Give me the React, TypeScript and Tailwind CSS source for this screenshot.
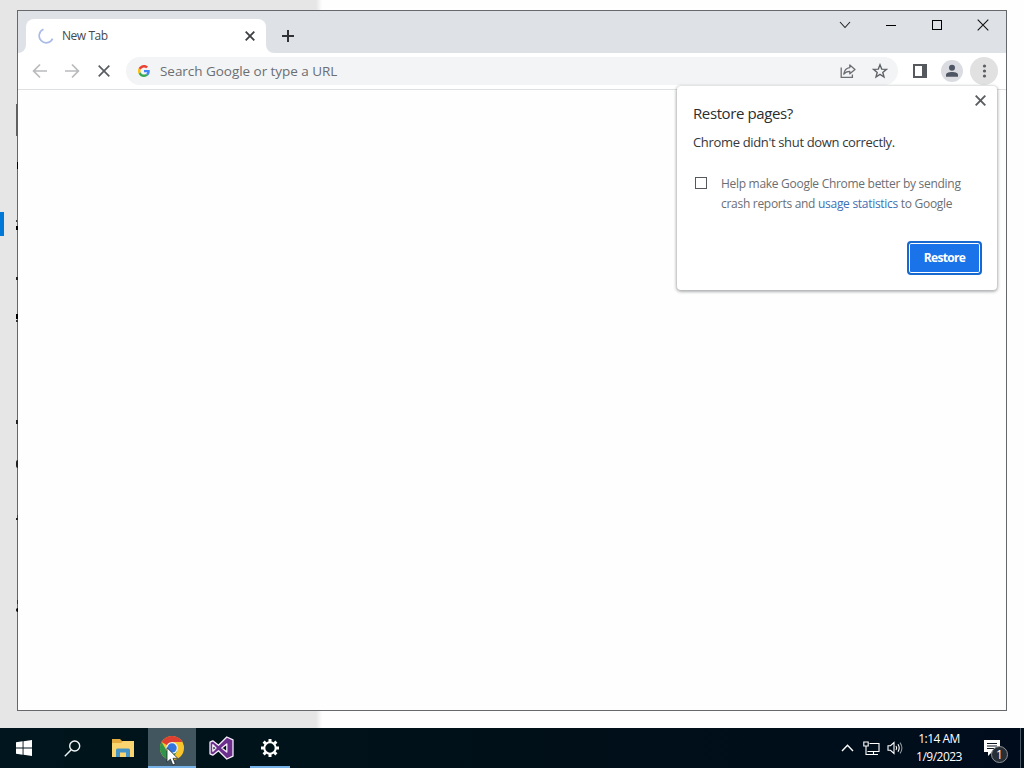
import type { ReactNode } from "react";

function Slot({ children, className = "" }: { children: ReactNode; className?: string }) {
  return <div className={`flex shrink-0 items-center justify-center ${className}`}>{children}</div>;
}

function CloseIcon({ size, stroke, color }: { size: number; stroke: number; color: string }) {
  return (
    <svg width={size} height={size} viewBox={`0 0 ${size} ${size}`} stroke={color} strokeWidth={stroke}>
      <path d={`M.7 .7 L${size - 0.7} ${size - 0.7} M${size - 0.7} .7 L.7 ${size - 0.7}`} />
    </svg>
  );
}

function ArrowIcon({ flip }: { flip?: boolean }) {
  return (
    <svg
      width="16"
      height="16"
      viewBox="0 0 16 16"
      fill="none"
      stroke="#b9babc"
      strokeWidth="1.7"
      className={flip ? "-scale-x-100" : ""}
    >
      <path d="M15 8H2M8 1.5L1.6 8L8 14.5" />
    </svg>
  );
}

function GoogleIcon() {
  return (
    <svg width="12" height="12" viewBox="0 0 48 48">
      <path fill="#EA4335" d="M24 9.5c3.54 0 6.71 1.22 9.21 3.6l6.85-6.85C35.9 2.38 30.47 0 24 0 14.62 0 6.51 5.38 2.56 13.22l7.98 6.19C12.43 13.72 17.74 9.5 24 9.5z" />
      <path fill="#4285F4" d="M46.98 24.55c0-1.57-.15-3.09-.38-4.55H24v9.02h12.94c-.58 2.96-2.26 5.48-4.78 7.18l7.73 6c4.51-4.18 7.09-10.36 7.09-17.65z" />
      <path fill="#FBBC05" d="M10.53 28.59c-.48-1.45-.76-2.99-.76-4.59s.27-3.14.76-4.59l-7.98-6.19C.92 16.46 0 20.12 0 24c0 3.88.92 7.54 2.56 10.78l7.97-6.19z" />
      <path fill="#34A853" d="M24 48c6.48 0 11.93-2.13 15.89-5.81l-7.73-6c-2.15 1.45-4.92 2.3-8.16 2.3-6.26 0-11.57-4.22-13.47-9.91l-7.98 6.19C6.51 42.62 14.62 48 24 48z" />
    </svg>
  );
}

function TabStrip() {
  return (
    <div className="flex h-[42px] shrink-0 bg-[#dee1e6] pl-2">
      <div className="relative mt-2 flex h-[34px] w-60 items-center rounded-t-lg bg-white pl-3 pr-[11px]">
        <svg width="8" height="8" className="absolute -left-2 bottom-0" fill="#fff">
          <path d="M8 0V8H0A8 8 0 0 0 8 0Z" />
        </svg>
        <svg width="8" height="8" className="absolute -right-2 bottom-0" fill="#fff">
          <path d="M0 0V8H8A8 8 0 0 1 0 0Z" />
        </svg>
        <svg width="16" height="16" viewBox="0 0 16 16" fill="none" stroke="#a9bbe6" strokeWidth="1.7">
          <path d="M5.5 1.3A7 7 0 1 0 14.6 10.6" />
        </svg>
        <span className="ml-2 flex-1 text-[12px] tracking-[-0.45px] text-[#46494d]">New Tab</span>
        <CloseIcon size={10} stroke={1.8} color="#3c4043" />
      </div>
      <Slot className="mt-2 h-[34px] w-11">
        <svg width="12" height="12" stroke="#303236" strokeWidth="2">
          <path d="M0 6H12M6 0V12" />
        </svg>
      </Slot>
      <div className="ml-auto flex h-7 text-black">
        <Slot className="w-[46px]">
          <svg width="12" height="8" fill="none" stroke="#222" strokeWidth="1.1">
            <path d="M1 1L6 6.5L11 1" />
          </svg>
        </Slot>
        <Slot className="w-[46px]">
          <div className="h-px w-2.5 bg-black" />
        </Slot>
        <Slot className="w-[46px]">
          <div className="size-2.5 border border-black" />
        </Slot>
        <Slot className="w-[46px]">
          <CloseIcon size={12} stroke={1.1} color="#111" />
        </Slot>
      </div>
    </div>
  );
}

function Toolbar() {
  return (
    <div className="flex h-[37px] shrink-0 items-center border-b border-[#dfe0e2] bg-white pl-1.5 pr-1.5">
      <Slot className="w-8">
        <ArrowIcon />
      </Slot>
      <Slot className="w-8">
        <ArrowIcon flip />
      </Slot>
      <Slot className="w-8">
        <CloseIcon size={12} stroke={1.7} color="#5a5d61" />
      </Slot>
      <div className="ml-1.5 mr-1.5 flex h-7 flex-1 items-center rounded-full bg-[#f3f4f5] pl-3 pr-0.5">
        <GoogleIcon />
        <span className="ml-2.5 flex-1 pt-px text-[13.5px] tracking-[-0.04px] text-[#6b6e72]">
          Search Google or type a URL
        </span>
        <Slot className="w-8">
          <svg width="16" height="16" viewBox="0 0 16 16" fill="none" stroke="#6b6e72" strokeWidth="1.3">
            <path d="M1.2 4.5V14.3H12.4V11.5" />
            <path d="M9.8 2L15 6.4L9.8 10.8V8.3C7 8.3 5.2 9 3.8 11.2C4.3 7.6 6.3 5 9.8 4.6Z" strokeLinejoin="round" />
          </svg>
        </Slot>
        <Slot className="w-8">
          <svg width="16" height="16" viewBox="0 0 16 16" fill="none" stroke="#5f6368" strokeWidth="1.4">
            <path d="M8 1.8L9.7 6.1L14.4 6.4L10.8 9.4L12 14L8 11.4L4 14L5.2 9.4L1.6 6.4L6.3 6.1Z" />
          </svg>
        </Slot>
      </div>
      <Slot className="w-8">
        <div className="h-3.5 w-3.5 border-2 border-r-[5px] border-[#55585c]" />
      </Slot>
      <Slot className="w-8">
        <svg width="22" height="22" viewBox="0 0 22 22">
          <circle cx="11" cy="11" r="11" fill="#dadce2" />
          <circle cx="11" cy="7.8" r="3" fill="#4f5663" />
          <path d="M5 16.8V15C5 12.8 8 12 11 12S17 12.8 17 15V16.8Z" fill="#4f5663" />
        </svg>
      </Slot>
      <Slot className="w-8">
        <svg width="28" height="28" viewBox="0 0 28 28" fill="#5a5d61">
          <circle cx="14" cy="14" r="14" fill="#e1e1e1" />
          <circle cx="14.5" cy="9" r="1.6" />
          <circle cx="14.5" cy="14" r="1.6" />
          <circle cx="14.5" cy="19" r="1.6" />
        </svg>
      </Slot>
    </div>
  );
}

function RestoreBubble() {
  return (
    <div className="absolute left-[659px] top-[75px] h-[204px] w-80 rounded bg-white px-4 pt-[17px] shadow-[0_1px_3px_1px_rgba(60,64,67,0.4)]">
      <div className="absolute right-[11px] top-[9px]">
        <CloseIcon size={11} stroke={1.9} color="#5a5d61" />
      </div>
      <h1 className="text-[15px] leading-5 tracking-[-0.39px] text-[#2b2d30]">Restore pages?</h1>
      <p className="mt-[9px] text-[13px] leading-5 tracking-[-0.34px] text-[#35373a]">Chrome didn't shut down correctly.</p>
      <div className="mt-[22px] flex">
        <div className="ml-0.5 mt-[3px] size-3 shrink-0 border-[1.5px] border-[#55585c]" />
        <div className="ml-3.5 whitespace-nowrap text-[12px] leading-5 tracking-[-0.29px] text-[#6b6e72]">
          <p>Help make Google Chrome better by sending</p>
          <p>
            crash reports and <span className="text-[#3e70b6]">usage statistics</span> to Google
          </p>
        </div>
      </div>
      <button className="absolute bottom-[15px] right-[15px] h-[34px] w-[75px] rounded border-2 border-[#1769cf] bg-[#1a73e8] text-[12px] font-bold tracking-[-0.65px] text-white shadow-[inset_0_0_0_1px_#fff]">
        Restore
      </button>
    </div>
  );
}

function ChromeLogo() {
  return (
    <svg width="24" height="24" viewBox="0 0 24 24">
      <circle cx="12" cy="12" r="12" fill="#f9c52d" />
      <path d="M12 12L1.6 6A12 12 0 0 1 22.4 6H12Z" fill="#df3f30" />
      <path d="M1.6 6A12 12 0 0 0 12 24L17.2 15L12 12L6.8 15Z" fill="#30954b" />
      <circle cx="12" cy="12" r="5.9" fill="#eef3f7" />
      <circle cx="12" cy="12" r="4.7" fill="#3475dd" />
    </svg>
  );
}

function Taskbar() {
  return (
    <div className="flex h-10 bg-linear-to-r from-[#00151d] via-[#001018] to-[#000c1c] text-white">
      <Slot className="w-12">
        <svg width="16" height="16" fill="#fff">
          <path d="M0 2.3L6.6 1.3V7.5H0ZM7.5 1.2L16 0V7.5H7.5ZM0 8.4H6.6V14.7L0 13.8ZM7.5 8.4H16V16L7.5 14.8Z" />
        </svg>
      </Slot>
      <Slot className="w-12">
        <svg width="17" height="17" fill="none" stroke="#f2f5f6" strokeWidth="1.4">
          <circle cx="10.7" cy="6" r="5" />
          <path d="M7.2 9.7L.8 16.2" />
        </svg>
      </Slot>
      <Slot className="w-[52px] pl-0.5">
        <svg width="22" height="18" viewBox="0 0 22 18">
          <path d="M0 0H8L10 2H21V17H0Z" fill="#e5ab3e" />
          <path d="M0 4H9L11 2H22V18H0Z" fill="#fad46e" />
          <path d="M4 18V11Q4 9.5 5.5 9.5H16.5Q18 9.5 18 11V18H14V13.5H8V18Z" fill="#4594c8" />
        </svg>
      </Slot>
      <div className="relative flex w-12 items-center justify-center border-b-2 border-[#76b1e8] bg-[#42565f] pt-0.5">
        <ChromeLogo />
        <svg width="14" height="20" viewBox="0 0 14 20" className="absolute left-[18px] top-[19px]">
          <path d="M1 .7V15.2L4.4 12.2L6.8 18L9.3 16.8L7 11.3H11.7Z" fill="#fff" stroke="#1b252a" strokeWidth=".8" />
        </svg>
      </div>
      <Slot className="w-[50px]">
        <svg width="25" height="24" viewBox="0 0 25 24" stroke="#f6effa" strokeWidth="1.3" strokeLinejoin="round" fillRule="evenodd">
          <path
            d="M17.8 1L24 3.8V20.2L17.8 23L9.5 14.8L3.8 19.2L1 17.8V6.2L3.8 4.8L9.5 9.2ZM17.8 8L12.8 12L17.8 16ZM3.8 8.8V15.2L7 12Z"
            fill="#6d2f8e"
          />
        </svg>
      </Slot>
      <div className="ml-1 flex w-10 items-center justify-center border-b-2 border-[#76b1e8] pt-0.5">
        <svg width="20" height="20" viewBox="-10 -10 20 20" fill="none" stroke="#fff">
          <circle r="5.7" strokeWidth="2" />
          <path
            d="M0-6V-9M0 6V9M-6 0H-9M6 0H9M-4.2-4.2L-6.4-6.4M4.2-4.2L6.4-6.4M-4.2 4.2L-6.4 6.4M4.2 4.2L6.4 6.4"
            strokeWidth="3"
          />
        </svg>
      </div>

      {/* System tray */}
      <div className="ml-auto flex">
        <Slot className="w-6">
          <svg width="13" height="8" fill="none" stroke="#fff" strokeWidth="1.4">
            <path d="M1 7L6.5 1.3L12 7" />
          </svg>
        </Slot>
        <Slot className="w-6">
          <svg width="17" height="15" fill="none" stroke="#fff" strokeWidth="1.1">
            <path d="M6.5 2.5H16V10.5H4.5M10.5 10.5V13.5M6 13.5H15" />
            <path d="M.8 1H5.2V5H.8ZM3 5V13.5H6" />
          </svg>
        </Slot>
        <Slot className="w-[23px]">
          <svg width="16" height="14" fill="none" stroke="#fff" strokeWidth="1.1">
            <path d="M1 4.7H3.5L7 1.5V12.5L3.5 9.3H1Z" />
            <path d="M9 5Q10.4 7 9 9M11 3.3Q13.4 7 11 10.7" />
            <path d="M13 1.6Q16.8 7 13 12.4" stroke="#8d969c" />
          </svg>
        </Slot>
        <div className="ml-px w-[64px] pt-0.5 text-center text-[12px] leading-[18px] tracking-[-0.5px]">
          <p>1:14 AM</p>
          <p>1/9/2023</p>
        </div>
        <div className="relative ml-[13px] w-[37px] border-r border-[#4b5964]">
          <svg width="17" height="16" className="mt-3">
            <path d="M0 0H16V12H8L4 16V12H0Z" fill="#fff" />
            <path d="M3 3.5H13M3 6H13M3 8.5H10" stroke="#0a1826" />
          </svg>
          <div className="absolute left-[7px] top-[18px] flex size-[17px] items-center justify-center rounded-full border border-[#8d9297] bg-[#272e36] text-[12px] leading-none">
            1
          </div>
        </div>
        <div className="w-[3px]" />
      </div>
    </div>
  );
}

// Slivers of the settings window that peek out left of the browser frame
function Slivers() {
  return (
    <div className="absolute left-4 top-0 w-0.5">
      <div className="mt-[104px] h-8 bg-[#606060]" />
      <div className="ml-px mt-[26px] h-[7px] bg-black" />
      <div className="mt-[51px] h-0.5 w-px bg-[#444]" />
      <div className="mt-1 h-1 bg-black" />
      <div className="mt-[47px] h-[3px] bg-[#222]" />
      <div className="mt-[34px] h-[5px] bg-black" />
      <div className="mt-px h-0.5 bg-[#333]" />
      <div className="mt-[98px] h-1 bg-[#222]" />
      <div className="mt-9 h-2 rounded-l bg-[#222]" />
      <div className="ml-px mt-[47px] h-[3px] bg-[#444]" />
      <div className="h-0.5 bg-[#222]" />
      <div className="ml-px mt-[80px] h-1 bg-[#333]" />
      <div className="mt-1 h-1 rounded-l bg-black" />
    </div>
  );
}

export default function App() {
  return (
    <div className="flex h-[768px] w-[1024px] flex-col overflow-hidden bg-[#fdfdfd] font-['Open_Sans','Noto_Sans',sans-serif]">
      <div className="relative h-[728px] bg-linear-to-r from-[#e6e6e6] from-[316px] to-[#fefefe] to-[322px] pl-[17px] pt-2.5">
        <div className="absolute left-0 top-[212px] h-6 w-1 bg-[#0078d7]" />
        <div className="relative flex h-[701px] w-[990px] flex-col border border-[#66686b] bg-[#fefefe]">
          <TabStrip />
          <Toolbar />
          <div className="flex-1" />
          <RestoreBubble />
        </div>
        <Slivers />
      </div>
      <Taskbar />
    </div>
  );
}
